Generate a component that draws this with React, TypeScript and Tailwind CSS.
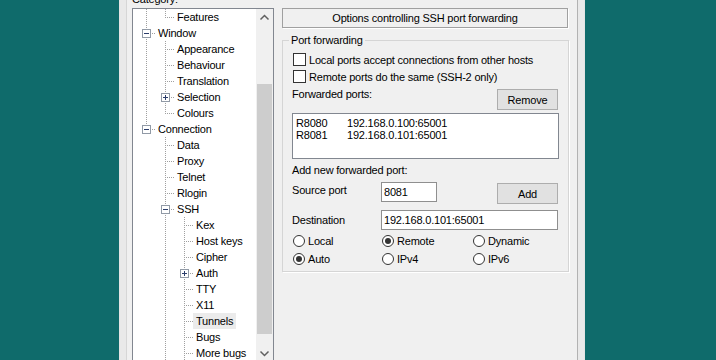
import React from 'react'

type Guide = 'none' | 'line'
type Own = 'tee' | 'elbow'

interface TreeRow {
  label: string
  guides: Guide[]
  own: Own
  box?: 'minus' | 'plus'
  selected?: boolean
}

const rows: TreeRow[] = [
  { label: 'Features', guides: ['line'], own: 'elbow' },
  { label: 'Window', guides: [], own: 'tee', box: 'minus' },
  { label: 'Appearance', guides: ['line'], own: 'tee' },
  { label: 'Behaviour', guides: ['line'], own: 'tee' },
  { label: 'Translation', guides: ['line'], own: 'tee' },
  { label: 'Selection', guides: ['line'], own: 'tee', box: 'plus' },
  { label: 'Colours', guides: ['line'], own: 'elbow' },
  { label: 'Connection', guides: [], own: 'elbow', box: 'minus' },
  { label: 'Data', guides: ['none'], own: 'tee' },
  { label: 'Proxy', guides: ['none'], own: 'tee' },
  { label: 'Telnet', guides: ['none'], own: 'tee' },
  { label: 'Rlogin', guides: ['none'], own: 'tee' },
  { label: 'SSH', guides: ['none'], own: 'tee', box: 'minus' },
  { label: 'Kex', guides: ['none', 'line'], own: 'tee' },
  { label: 'Host keys', guides: ['none', 'line'], own: 'tee' },
  { label: 'Cipher', guides: ['none', 'line'], own: 'tee' },
  { label: 'Auth', guides: ['none', 'line'], own: 'tee', box: 'plus' },
  { label: 'TTY', guides: ['none', 'line'], own: 'tee' },
  { label: 'X11', guides: ['none', 'line'], own: 'tee' },
  { label: 'Tunnels', guides: ['none', 'line'], own: 'tee', selected: true },
  { label: 'Bugs', guides: ['none', 'line'], own: 'tee' },
  { label: 'More bugs', guides: ['none', 'line'], own: 'tee' },
]

const DOT = '#a0a0a0'

function GuideCell({ kind, box }: { kind: Guide | Own; box?: 'minus' | 'plus' }) {
  return (
    <svg width="19" height="16" viewBox="0 0 19 16" className="shrink-0 block">
      {kind !== 'none' && (
        <line x1="10.5" y1="0" x2="10.5" y2={kind === 'elbow' ? 9 : 16} stroke={DOT} strokeDasharray="1 1" />
      )}
      {(kind === 'tee' || kind === 'elbow') && (
        <line x1="12" y1="8.5" x2="19" y2="8.5" stroke={DOT} strokeDasharray="1 1" />
      )}
      {box && (
        <>
          <rect x="6.5" y="4.5" width="8" height="8" fill="#fff" stroke="#919aa6" />
          <line x1="8" y1="8.5" x2="13" y2="8.5" stroke="#2c3e6b" />
          {box === 'plus' && <line x1="10.5" y1="6" x2="10.5" y2="11" stroke="#2c3e6b" />}
        </>
      )}
    </svg>
  )
}

function Chevron({ down }: { down?: boolean }) {
  return (
    <svg width="17" height="17" viewBox="0 0 17 17" className="block">
      <polyline
        points={down ? '4.5,6.5 8.5,10.5 12.5,6.5' : '4.5,10.5 8.5,6.5 12.5,10.5'}
        fill="none"
        stroke="#606060"
        strokeWidth="1.5"
      />
    </svg>
  )
}

function Radio({ checked, label }: { checked?: boolean; label: string }) {
  return (
    <div className="flex items-center h-[14px]">
      <span className="w-[12px] h-[12px] rounded-full border border-[#333] bg-white flex items-center justify-center shrink-0">
        {checked && <span className="w-[6px] h-[6px] rounded-full bg-[#333]" />}
      </span>
      <span className="ml-[3px] leading-[14px]">{label}</span>
    </div>
  )
}

function Checkbox({ label }: { label: string }) {
  return (
    <div className="flex items-center h-[15px]">
      <span className="ml-[1px] w-[13px] h-[13px] border border-[#333] bg-white shrink-0" />
      <span className="ml-[3px] leading-[14px]">{label}</span>
    </div>
  )
}

function Button({ children }: { children: React.ReactNode }) {
  return (
    <div className="w-[61px] h-[21px] border border-[#adadad] bg-[#e1e1e1] flex items-center justify-center leading-[14px]">
      {children}
    </div>
  )
}

export default function App() {
  return (
    <div className="w-[716px] h-[360px] overflow-hidden bg-[#0f6b6b] flex font-['Liberation_Sans',Arial,sans-serif] text-[11px] tracking-[-0.2px] text-black">
      <div className="w-[119px] shrink-0" />
      <div className="w-[466px] shrink-0 h-full flex border-x border-[#e4e4e4] bg-[#e9e9e9] px-[6px]">
        <div className="flex-1 h-full flex bg-[#f0f0f0] border-l border-l-[#d6d6d6] border-r border-r-[#b2b2b2] pl-[5px] pr-[8px]">
          {/* category tree */}
          <div className="w-[142px] shrink-0 flex flex-col">
            <div className="-mt-[8px] h-[14px] leading-[14px] mb-[2px]">Category:</div>
            <div className="h-[355px] shrink-0 border border-[#828790] bg-white flex overflow-hidden">
              <div className="w-[123px] flex flex-col pl-[3px]">
                {rows.map((r) => (
                  <div key={r.label} className="h-[16px] flex shrink-0">
                    {r.guides.map((g, i) => (
                      <GuideCell key={i} kind={g} />
                    ))}
                    <GuideCell kind={r.own} box={r.box} />
                    <span className={`px-[3px] leading-[16px] whitespace-nowrap ${r.selected ? 'bg-[#ebebeb]' : ''}`}>
                      {r.label}
                    </span>
                  </div>
                ))}
              </div>
              <div className="w-[17px] shrink-0 bg-[#f0f0f0] flex flex-col">
                <Chevron />
                <div className="h-[58px] shrink-0" />
                <div className="h-[250px] shrink-0 mx-[1px] bg-[#cdcdcd]" />
                <div className="flex-1" />
                <Chevron down />
              </div>
            </div>
          </div>

          {/* options panel */}
          <div className="w-[287px] shrink-0 ml-[8px] flex flex-col pt-[8px]">
            <div className="w-[286px] h-[20px] border border-[#a0a0a0] shadow-[1px_1px_0_#ffffff] flex items-center justify-center leading-[14px]">
              Options controlling SSH port forwarding
            </div>
            <fieldset className="mt-[5px] border border-[#d5d5d5] shadow-[1px_1px_0_#ffffff] pb-[5px]">
              <legend className="ml-[6px] px-[2px] leading-[14px] h-[14px]">Port forwarding</legend>
              <div className="px-[9px] flex flex-col">
                <div className="mt-[5px]">
                  <Checkbox label="Local ports accept connections from other hosts" />
                </div>
                <div className="mt-[2px]">
                  <Checkbox label="Remote ports do the same (SSH-2 only)" />
                </div>
                <div className="mt-[5px] flex items-start">
                  <span className="-mt-[2px] leading-[14px]">Forwarded ports:</span>
                  <div className="ml-auto mr-[1px]">
                    <Button>Remove</Button>
                  </div>
                </div>
                <div className="mt-[3px] h-[46px] border border-[#828790] bg-white pt-[3px] pl-[3px] leading-[12px]">
                  <div className="flex">
                    <span className="w-[51px]">R8080</span>
                    <span>192.168.0.100:65001</span>
                  </div>
                  <div className="flex">
                    <span className="w-[51px]">R8081</span>
                    <span>192.168.0.101:65001</span>
                  </div>
                </div>
                <div className="mt-[4px] h-[14px] leading-[14px]">Add new forwarded port:</div>
                <div className="mt-[5px] flex items-start">
                  <span className="w-[89px] mt-[1px] leading-[14px]">Source port</span>
                  <div className="w-[56px] h-[20px] border border-[#8f8f8f] bg-white pl-[2px] leading-[18px]">8081</div>
                  <div className="ml-auto mr-[1px] mt-[1px]">
                    <Button>Add</Button>
                  </div>
                </div>
                <div className="mt-[6px] flex items-start">
                  <span className="w-[89px] mt-[3px] leading-[14px]">Destination</span>
                  <div className="w-[177px] h-[20px] border border-[#8f8f8f] bg-white pl-[2px] leading-[18px]">
                    192.168.0.101:65001
                  </div>
                </div>
                <div className="mt-[4px] flex pl-[1px]">
                  <div className="w-[89px]">
                    <Radio label="Local" />
                  </div>
                  <div className="w-[91px]">
                    <Radio label="Remote" checked />
                  </div>
                  <Radio label="Dynamic" />
                </div>
                <div className="mt-[4px] flex pl-[1px]">
                  <div className="w-[89px]">
                    <Radio label="Auto" checked />
                  </div>
                  <div className="w-[91px]">
                    <Radio label="IPv4" />
                  </div>
                  <Radio label="IPv6" />
                </div>
              </div>
            </fieldset>
          </div>
        </div>
      </div>
    </div>
  )
}
